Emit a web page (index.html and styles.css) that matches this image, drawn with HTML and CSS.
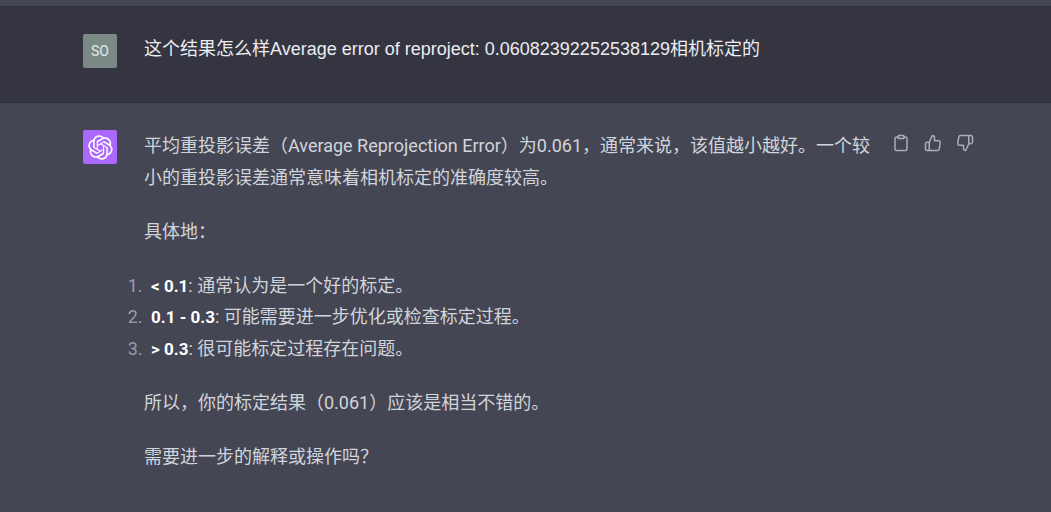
FILE: index.html
```html
<!DOCTYPE html>
<html lang="zh-CN">
<head>
<meta charset="utf-8">
<title>ChatGPT</title>
<link rel="stylesheet" href="styles.css">
</head>
<body>
<main class="thread">
  <article class="turn turn-user">
    <div class="avatar avatar-user">SO</div>
    <div class="message"><p>这个结果怎么样Average error of reproject: 0.06082392252538129相机标定的</p></div>
  </article>
  <article class="turn turn-assistant">
    <div class="avatar avatar-assistant">
      <svg class="logo" viewBox="0 0 41 41" fill="currentColor" role="img" aria-label="ChatGPT"><path d="M37.532 16.87a9.963 9.963 0 0 0-.856-8.184 10.078 10.078 0 0 0-10.855-4.835A9.964 9.964 0 0 0 18.306.5a10.079 10.079 0 0 0-9.614 6.977 9.967 9.967 0 0 0-6.664 4.834 10.08 10.08 0 0 0 1.24 11.817 9.965 9.965 0 0 0 .856 8.185 10.079 10.079 0 0 0 10.855 4.835 9.965 9.965 0 0 0 7.516 3.35 10.078 10.078 0 0 0 9.617-6.981 9.967 9.967 0 0 0 6.663-4.834 10.079 10.079 0 0 0-1.243-11.813ZM22.498 37.886a7.474 7.474 0 0 1-4.799-1.735c.061-.033.168-.091.237-.134l7.964-4.6a1.294 1.294 0 0 0 .655-1.134V19.054l3.366 1.944a.12.12 0 0 1 .066.092v9.299a7.505 7.505 0 0 1-7.49 7.496ZM6.392 31.006a7.471 7.471 0 0 1-.894-5.023c.06.036.162.099.237.141l7.964 4.6a1.297 1.297 0 0 0 1.308 0l9.724-5.614v3.888a.12.12 0 0 1-.048.103l-8.051 4.649a7.504 7.504 0 0 1-10.24-2.744ZM4.297 13.62A7.469 7.469 0 0 1 8.2 10.333c0 .068-.004.19-.004.274v9.201a1.294 1.294 0 0 0 .654 1.132l9.723 5.614-3.366 1.944a.12.12 0 0 1-.114.01L7.04 23.856a7.504 7.504 0 0 1-2.743-10.237Zm27.658 6.437-9.724-5.615 3.367-1.943a.121.121 0 0 1 .113-.01l8.052 4.648a7.498 7.498 0 0 1-1.158 13.528v-9.476a1.293 1.293 0 0 0-.65-1.132Zm3.35-5.043c-.059-.037-.162-.099-.236-.141l-7.965-4.6a1.298 1.298 0 0 0-1.308 0l-9.723 5.614v-3.888a.12.12 0 0 1 .048-.103l8.05-4.645a7.497 7.497 0 0 1 11.135 7.763Zm-21.063 6.929-3.367-1.944a.12.12 0 0 1-.065-.092v-9.299a7.497 7.497 0 0 1 12.293-5.756 6.94 6.94 0 0 0-.236.134l-7.965 4.6a1.294 1.294 0 0 0-.654 1.132l-.006 11.225Zm1.829-3.943 4.33-2.501 4.332 2.5v5l-4.331 2.5-4.331-2.5V18Z"/></svg>
    </div>
    <div class="message">
      <p>平均重投影误差（Average Reprojection Error）为0.061，通常来说，该值越小越好。一个较小的重投影误差通常意味着相机标定的准确度较高。</p>
      <p>具体地：</p>
      <ol>
        <li><strong>&lt; 0.1</strong>: 通常认为是一个好的标定。</li>
        <li><strong>0.1 - 0.3</strong>: 可能需要进一步优化或检查标定过程。</li>
        <li><strong>&gt; 0.3</strong>: 很可能标定过程存在问题。</li>
      </ol>
      <p>所以，你的标定结果（0.061）应该是相当不错的。</p>
      <p>需要进一步的解释或操作吗？</p>
    </div>
    <div class="actions">
      <button type="button" aria-label="复制"><svg class="icon" viewBox="0 0 24 24"><path d="M16 4h2a2 2 0 0 1 2 2v14a2 2 0 0 1-2 2H6a2 2 0 0 1-2-2V6a2 2 0 0 1 2-2h2"/><rect x="8" y="2" width="8" height="4" rx="1"/></svg></button>
      <button type="button" aria-label="赞"><svg class="icon" viewBox="0 0 24 24"><path d="M14 9V5a3 3 0 0 0-3-3l-4 9v11h11.28a2 2 0 0 0 2-1.7l1.38-9a2 2 0 0 0-2-2.3zM7 22H4a2 2 0 0 1-2-2v-7a2 2 0 0 1 2-2h3"/></svg></button>
      <button type="button" aria-label="踩"><svg class="icon" viewBox="0 0 24 24"><path d="M10 15v4a3 3 0 0 0 3 3l4-9V2H5.720a2 2 0 0 0-2 1.700l-1.380 9a2 2 0 0 0 2 2.300zm7-13h2.670A2.310 2.310 0 0 1 22 4v7a2.310 2.310 0 0 1-2.330 2H17"/></svg></button>
    </div>
  </article>
</main>
</body>
</html>
```
FILE: styles.css
```css
* {
  box-sizing: border-box;
}

body {
  margin: 0;
  background: #444654;
  color: #d1d5db;
  font-family: Roboto, "Noto Sans CJK SC", sans-serif;
  font-size: 18px;
  line-height: 1.75;
}

.thread {
  padding-top: 6px;
}

.turn {
  display: flex;
  align-items: flex-start;
  padding: 27px 77px 27px 83px;
  border-bottom: 1px solid #2d2e38;
}

.turn-user {
  background: #343541;
  color: #ececf1;
  border-top: 1px solid #32333e;
  padding-bottom: 34px;
}

.turn-assistant {
  padding-bottom: 39px;
}

.avatar {
  display: flex;
  flex: none;
  align-items: center;
  justify-content: center;
  width: 34px;
  height: 34px;
  margin-right: 27px;
  border-radius: 2px;
}

.avatar-user {
  background: #7b8987;
  color: #e6e9e8;
  font-size: 14px;
}

.avatar-assistant {
  background: #ab68ff;
  color: #fff;
}

.logo {
  width: 25px;
  height: 25px;
}

.message {
  flex: 1;
  min-width: 0;
}

.turn-user .message {
  font-family: "Liberation Sans", "Noto Sans CJK SC", sans-serif;
}

.message p,
.message ol {
  margin: 0 0 1.25em;
}

.message > :last-child {
  margin-bottom: 0;
}

.message ol {
  padding: 0 0 0 3px;
}

.message li {
  padding-left: 4px;
}

.message li::marker {
  color: #9b9bad;
}

.message strong {
  color: #fff;
  font-size: 17px;
}

.actions {
  display: flex;
  flex: none;
  gap: 14px;
  margin-left: 12px;
  padding-top: 4px;
}

.actions button {
  display: flex;
  padding: 0;
  border: 0;
  background: none;
  color: #acacbe;
  cursor: pointer;
}

.icon {
  width: 18px;
  height: 18px;
  fill: none;
  stroke: currentColor;
  stroke-width: 2;
  stroke-linecap: round;
  stroke-linejoin: round;
}
```
